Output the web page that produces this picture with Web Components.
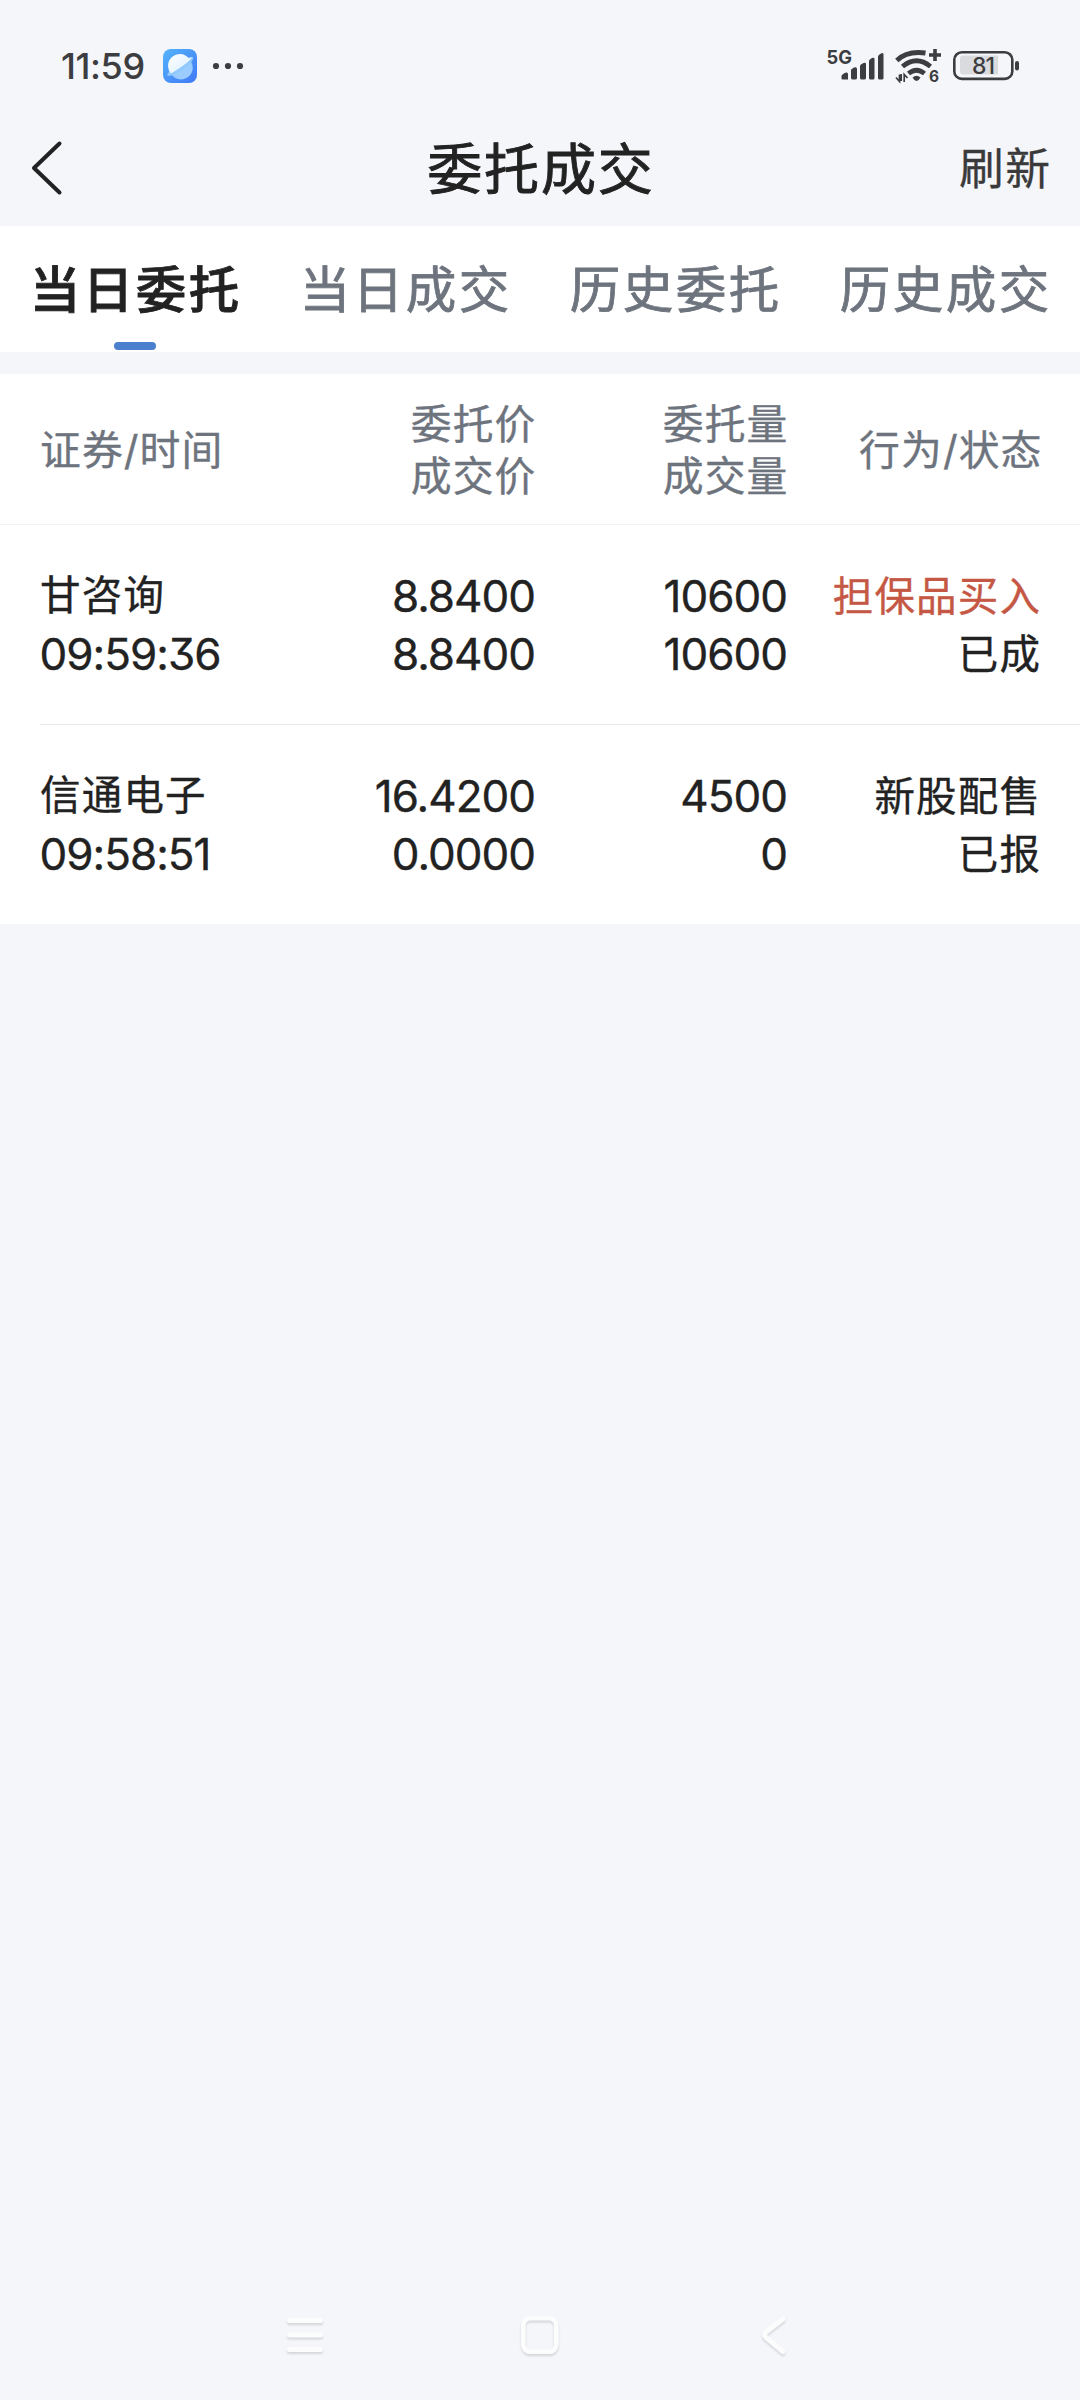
<!DOCTYPE html>
<html lang="zh-CN">
<head>
<meta charset="utf-8">
<meta name="viewport" content="width=device-width, initial-scale=1">
<title>委托成交</title>
<style>
html,body{margin:0;background:#f4f6fa}
body{font-family:Inter,"Noto Sans CJK SC",sans-serif;color:#222;font-feature-settings:"cv09","calt" 0}
</style>
</head>
<body>
<app-screen>
  <status-bar slot="top" time="11:59" battery="81"></status-bar>
  <title-bar slot="top" action="刷新">委托成交</title-bar>
  <tab-bar>
    <tab-item active>当日委托</tab-item>
    <tab-item>当日成交</tab-item>
    <tab-item>历史委托</tab-item>
    <tab-item>历史成交</tab-item>
  </tab-bar>
  <order-table>
    <order-head>
      <span slot="a">证券/时间</span>
      <span slot="b">委托价<br>成交价</span>
      <span slot="c">委托量<br>成交量</span>
      <span slot="d">行为/状态</span>
    </order-head>
    <order-row name="甘咨询" time="09:59:36" price="8.8400" deal="8.8400" qty="10600" done="10600" side="担保品买入" state="已成" buy></order-row>
    <order-row name="信通电子" time="09:58:51" price="16.4200" deal="0.0000" qty="4500" done="0" side="新股配售" state="已报"></order-row>
  </order-table>
  <nav-bar slot="bottom"></nav-bar>
</app-screen>
<script>
const define = (tag, html) => customElements.define(tag, class extends HTMLElement {
  constructor() {
    super();
    const root = this.attachShadow({ mode: 'open' });
    const t = document.createElement('template');
    t.innerHTML = html;
    root.append(t.content.cloneNode(true));
  }
  connectedCallback() {
    this.shadowRoot.querySelectorAll('[data-a]').forEach(n => {
      n.textContent = this.getAttribute(n.dataset.a) || '';
    });
  }
});

define('app-screen', `
<style>
:host{display:flex;flex-direction:column;width:1080px;height:2400px;background:#f4f6fa;overflow:hidden}
main{flex:1;display:flex;flex-direction:column;gap:22px}
</style>
<slot name="top"></slot><main><slot></slot></main><slot name="bottom"></slot>`);

define('status-bar', `
<style>
:host{display:flex;box-sizing:border-box;height:110px;padding:22px 61px 0 61px;justify-content:space-between;align-items:center;color:#3c3d40}
.l,.r{display:flex;align-items:center}
.t{font-size:36px;font-weight:500;line-height:44px;letter-spacing:-.4px;width:102px}
svg{display:block;overflow:visible}
.sig{margin-right:12px}
.bat{display:grid;width:66px;height:30px}
.bat>*{grid-area:1/1}
.bat span{font-size:23px;font-weight:500;line-height:30px;width:60px;text-align:center;letter-spacing:-1px}
.five{font:700 19px/1 Inter,sans-serif}
</style>
<div class="l"><span class="t" data-a="time"></span>
<svg width="80" height="34" viewBox="163 49 80 34">
<defs><linearGradient id="g" x1="0" y1="0" x2="1" y2="1"><stop offset="0" stop-color="#55b4fb"/><stop offset="1" stop-color="#3f78f6"/></linearGradient>
<linearGradient id="w" x1="0" y1="0" x2="1" y2="1"><stop offset="0" stop-color="#fff"/><stop offset="1" stop-color="#d9edff"/></linearGradient></defs>
<rect x="163" y="49" width="34" height="34" rx="8" fill="url(#g)"/>
<path d="M171 73.5A11.3 11.3 0 0 0 191.200 62Z" fill="#9accff"/>
<path d="M169.500 71Q165.500 76 168.500 76C175 76 195 63 193 57Q191.500 56.500 188 58Z" fill="#8fc9fe"/>
<path d="M171 73.5A11.300 11.300 0 0 1 188.500 58L191.800 57.300Q190 62 171 73.500Z" fill="url(#w)"/>
<g fill="#3c3d40"><circle cx="216" cy="66" r="3.100"/><circle cx="228" cy="66" r="3.100"/><circle cx="240" cy="66" r="3.100"/></g>
</svg></div>
<div class="r">
<svg class="sig" width="115" height="36" viewBox="827 48 115 36" fill="#3c3d40">
<text class="five" x="827.500" y="64" textLength="25.500" lengthAdjust="spacingAndGlyphs">5G</text>
<path d="M842.500 79V76Q843 74 847 72.500Q849 72 849 74V79.500H843.500ZM852 70Q852 69 855 67.500Q858 66.500 858 69V78Q858 79.500 856 79.500H854Q852 79.500 852 78ZM861 66Q861 64.500 864.500 63Q867 62 867 64V78Q867 79.500 865 79.500H863Q861 79.500 861 78ZM870 61Q870 59.500 873 58Q875.500 57 875.500 59V78Q875.500 79.500 874 79.500H871.500Q870 79.500 870 78ZM879 56.500Q879 55 882 53.500Q884.500 52 884.500 54.500V78Q884.500 79.500 883 79.500H880.500Q879 79.500 879 78Z"/>
<g fill="none" stroke="#3c3d40" stroke-width="4.800">
<path d="M897.800 60.500Q908 50.500 926.500 53"/><path d="M903.500 66.500Q917.500 55 931.500 66.500"/><path d="M909.500 73.500Q917.500 67 925.500 73.500"/></g>
<path d="M913.500 77.500Q917.500 74 921.500 77.500Q920 80.500 917.500 81Q915 80.500 913.500 77.500Z"/>
<path d="M936 49V61M930 55H942" stroke="#3c3d40" stroke-width="3.600"/>
<path d="M897 77.500L900.500 81.500V74.500M905.200 82V74.500L908.500 78M902.200 74V81" fill="none" stroke="#3c3d40" stroke-width="1.700"/>
<text x="930" y="82" style="font:700 15.500px Inter,sans-serif">6</text>
</svg>
<div class="bat"><svg width="66" height="30" viewBox="953 51 66 30"><rect x="954.300" y="52.300" width="58" height="26.600" rx="7.500" fill="none" stroke="#3c3d40" stroke-width="2.600"/><path d="M963 55.500H998V74.500H963Q960 74.500 960 71.500V58.500Q960 55.500 963 55.500Z" fill="#dadbdf"/><rect x="1015" y="61" width="4" height="9.500" rx="2" fill="#3c3d40"/></svg><span data-a="battery"></span></div>
</div>`);

define('title-bar', `
<style>
:host{display:grid;grid-template-columns:1fr auto 1fr;align-items:center;height:116px;box-sizing:border-box;padding:2px 30px 0}
h1{margin:0;font-size:55px;font-weight:400;-webkit-text-stroke:.9px;letter-spacing:1.800px;line-height:80px;margin-right:-1.800px}
svg{margin-top:-2px}
.act{justify-self:end;font-size:44.800px;letter-spacing:1.500px;line-height:66px;color:#3a3a3a;margin-right:-1.500px;-webkit-text-stroke:.3px}
</style>
<svg width="34" height="56" viewBox="30 140 34 56" fill="none" stroke="#222" stroke-width="4" stroke-linecap="round" stroke-linejoin="round"><path d="M59.500 143.500L34 168L59.500 192.500"/></svg>
<h1><slot></slot></h1><span class="act" data-a="action"></span>`);

define('tab-bar', `
<style>:host{display:flex;height:126px;background:#fff}::slotted(*){flex:1}</style><slot></slot>`);

define('tab-item', `
<style>
:host{display:flex;flex-direction:column;align-items:center;justify-content:space-between;box-sizing:border-box;padding:27px 0 2px;color:#6e747e;font-size:50.500px;line-height:74px;letter-spacing:2.500px;font-weight:400;-webkit-text-stroke:.8px}
:host([active]){color:#222;font-weight:500;-webkit-text-stroke:.8px}
span{margin-right:-1.500px;white-space:nowrap}
i{width:42px;height:8px;border-radius:4px}
:host([active]) i{background:#4b80cf}
</style><span><slot></slot></span><i></i>`);

define('order-table', `<style>:host{display:flex;flex-direction:column;background:#fff}</style><slot></slot>`);

const cols = 'display:grid;grid-template-columns:260px 235px 252px 253px;';
define('order-head', `
<style>
:host{${cols}align-items:center;box-sizing:border-box;height:151px;padding:2px 40px 0;border-bottom:1px solid #f2f3f5;color:#6e747e;font-size:40.800px;line-height:52px;letter-spacing:1.100px;-webkit-text-stroke:.35px}
div{text-align:right;white-space:nowrap;margin-right:-1.500px}
.first{text-align:left}
.last{margin-right:-2.500px}
</style>
<div class="first"><slot name="a"></slot></div><div><slot name="b"></slot></div><div><slot name="c"></slot></div><div class="last"><slot name="d"></slot></div>`);

define('order-row', `
<style>
:host{display:block;padding-left:40px;height:199px}
.row{${cols}align-items:center;height:199px;padding-right:40px;color:#222;font-size:40.500px;line-height:58px;letter-spacing:1.200px;border-bottom:1px solid #e9e9ea;-webkit-text-stroke:.35px}
:host(:last-of-type) .row{border-bottom:0}
:host(:not(:last-of-type)){height:200px}
.row>div{display:flex;flex-direction:column;align-items:flex-end;white-space:nowrap}
.row>div:first-child{align-items:flex-start}
.row>div:last-child{margin:2px -1.200px 0 0}
.n{font-size:44px;letter-spacing:-1px}
.row>div:first-child .n{margin-left:-.5px}
:host([buy]) .side{color:#c55845}
</style>
<div class="row">
<div><span data-a="name"></span><span class="n" data-a="time"></span></div>
<div><span class="n" data-a="price"></span><span class="n" data-a="deal"></span></div>
<div><span class="n" data-a="qty"></span><span class="n" data-a="done"></span></div>
<div><span class="side" data-a="side"></span><span data-a="state"></span></div>
</div>`);

define('nav-bar', `
<style>
:host{display:flex;justify-content:space-between;align-items:center;box-sizing:border-box;height:130px;padding:0 283px 0 283px}
svg{display:block;filter:drop-shadow(0 2px 1px rgba(0,0,0,.13))}
</style>
<svg width="44" height="44" viewBox="283 2312 44 44" stroke="#fcfcfd" stroke-width="5" stroke-linecap="round"><path d="M289.500 2319.500H320.500M289.500 2334H320.500M289.500 2348.500H320.500"/></svg>
<svg width="44" height="44" viewBox="518 2312 44 44"><rect x="523.300" y="2317.300" width="33" height="33.500" rx="7" fill="none" stroke="#fcfcfd" stroke-width="4.600"/></svg>
<svg width="44" height="44" viewBox="753 2312 44 44" fill="none" stroke="#fcfcfd" stroke-width="5" stroke-linecap="round"><path d="M783 2318L766 2331Q763 2333.500 766 2336.500L783 2350.500"/></svg>`);
</script>
</body>
</html>
